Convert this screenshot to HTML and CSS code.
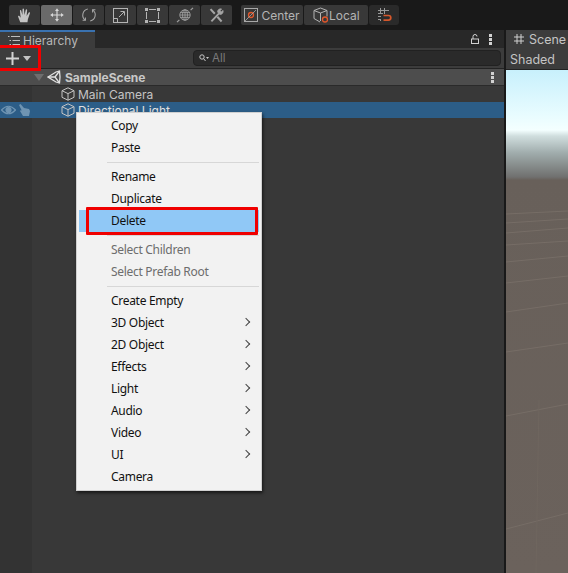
FILE: index.html
```html
<!DOCTYPE html>
<html lang="en">
<head>
    <meta charset="UTF-8">
    <title>Hierarchy</title>
    <link rel="stylesheet" href="styles.css">
</head>
<body>

    <div class="toolbar">
        <div class="tool-group">
            <button class="tool">
                <svg width="17" height="17" viewBox="0 0 20 20"><path d="M5 18 2.500 11.500c-.4-1 .9-1.600 1.500-.8L5.500 12.500 4.600 4.500c-.1-1.100 1.400-1.300 1.600-.2L7.500 9.500 7.700 2.700c0-1.100 1.600-1.100 1.700 0L10 9.500 11.500 3.200c.2-1 1.700-.8 1.600.3L12.500 10.500 15 6.500c.6-.9 1.800-.2 1.400.8L14 14.500 13.500 18Z" fill="#c4c4c4"/></svg>
            </button>
            <button class="tool tool-on">
                <svg width="16" height="16" viewBox="0 0 20 20" fill="none" stroke="#d8d8d8" stroke-width="1.500"><path d="M10 4v12M4 10h12"/><path d="M7.500 5 10 1.500 12.500 5ZM7.500 15 10 18.500 12.500 15ZM5 7.500 1.500 10 5 12.500ZM15 7.500 18.500 10 15 12.500Z" fill="#d8d8d8" stroke="none"/></svg>
            </button>
            <button class="tool">
                <svg width="16" height="16" viewBox="0 0 20 20" fill="none" stroke="#a8a8a8" stroke-width="1.300"><path d="M8.500 2.500A7.800 7.800 0 0 0 5.500 16.500M11.500 17.500A7.800 7.800 0 0 0 14.500 3.500"/><path d="M5.500 13v3.500H2M14.500 7V3.500H18"/></svg>
            </button>
            <button class="tool">
                <svg width="15" height="15" viewBox="0 0 15 15" fill="none" stroke="#b4b4b4"><rect x=".5" y=".5" width="14" height="14"/><path d="M.5 10.500h4v4"/><path d="M6 9 11 4M7.500 3.500h4V7.500"/></svg>
            </button>
            <button class="tool">
                <svg width="15" height="15" viewBox="0 0 15 15" fill="#b4b4b4"><rect x="0" y="0" width="3" height="3"/><rect x="12" y="0" width="3" height="3"/><rect x="0" y="12" width="3" height="3"/><rect x="12" y="12" width="3" height="3"/><rect x="4" y="1" width="7" height="1"/><rect x="4" y="13" width="7" height="1"/><rect x="1" y="4" width="1" height="7"/><rect x="13" y="4" width="1" height="7"/></svg>
            </button>
            <button class="tool">
                <svg width="18" height="16" viewBox="0 0 22 20" fill="none" stroke="#a0a0a0" stroke-width="1.100"><circle cx="11" cy="10" r="6.500"/><ellipse cx="11" cy="10" rx="3" ry="6.500"/><path d="M4.500 10h13M11 3.500v13M5.500 7h11M5.500 13h11"/><path d="M1 19l3-3M21 1l-3 3" stroke-width="1.500"/></svg>
            </button>
            <button class="tool">
                <svg width="17" height="17" viewBox="0 0 20 20" fill="none" stroke="#a4a4a4"><path d="M3 2.500 8 8M11 11.500 16 17" stroke-width="2.400"/><path d="M4 17 13 7.500" stroke-width="2.200"/><path d="M11.500 6.500a3.300 3.300 0 0 1 4.500-4l-2 2 1.500 1.500 2-2a3.300 3.300 0 0 1-4 4.500" fill="#a4a4a4" stroke-width="1"/></svg>
            </button>
        </div>
        <div class="tool-group pivot-group">
            <button class="tool tool-wide center-btn">
                <svg width="14" height="14" viewBox="0 0 14 14" fill="none"><rect x=".5" y=".5" width="13" height="13" stroke="#a8a8a8"/><circle cx="7" cy="7" r="2.500" stroke="#e2572b" stroke-width="1.300"/><path d="M1 13 12 2" stroke="#a8a8a8" stroke-width=".8"/></svg>
                <span>Center</span>
            </button>
            <button class="tool tool-wide local-btn">
                <svg width="16" height="16" viewBox="0 0 16 16" fill="none" stroke="#b4b4b4"><path d="M7.500 1 14 3.500v6M7.500 1 1 3.500v8L7 15M1 3.500 7.500 6 14 3.500M7.500 6v8"/><circle cx="12" cy="12.500" r="2.500" stroke="#e2572b" stroke-width="1.300"/></svg>
                <span>Local</span>
            </button>
        </div>
        <button class="tool snap-btn">
            <svg width="15" height="14" viewBox="0 0 15 14" fill="none"><path d="M3.500 0v6M7.500 0v6M1 2.500h11M1 5.500h5" stroke="#989898"/><path d="M1 8.500h2M1 11.500h2M3.500 8v1M3.500 11v2" stroke="#989898"/><path d="M6.500 7.500h5a2.300 2.300 0 0 1 0 4.600h-5" stroke="#d5572b" stroke-width="1.700"/></svg>
        </button>
    </div>

    <div class="workspace">
        <section class="hierarchy">
            <div class="tabbar">
                <div class="tab">
                    <svg width="12" height="9" viewBox="0 0 12 9" fill="none" stroke="#bdbdbd"><path d="M3 .5h9M4.500 4.500H12M4.500 8.500H12"/><path d="M0 .5h1.500M1.500 4.500h1.500M1.500 8.500h1.500"/></svg>
                    <span>Hierarchy</span>
                </div>
                <div class="tab-actions">
                    <svg width="8" height="10" viewBox="0 0 8 10" fill="none" stroke="#d2d2d2"><rect x=".5" y="5" width="7" height="4.500"/><path d="M2 5V2.500a2 2 0 0 1 4 0"/></svg>
                    <span class="dots"></span>
                </div>
            </div>
            <div class="searchbar">
                <div class="add-btn">
                    <svg width="13" height="13" viewBox="0 0 13 13"><path d="M5.500 0h2v5.500H13v2H7.500V13h-2V7.500H0v-2h5.500Z" fill="#d2d2d2"/></svg>
                    <span class="caret"></span>
                </div>
                <div class="search">
                    <svg width="10" height="8" viewBox="0 0 10 8" fill="none" stroke="#c8c8c8"><circle cx="3" cy="3" r="2.200"/><path d="M4.600 4.600 6.500 7"/><path d="M7 3h3L8.500 5Z" fill="#c8c8c8" stroke="none"/></svg>
                    <span>All</span>
                </div>
            </div>
            <div class="scene-row">
                <span class="fold"></span>
                <svg class="unity-mark" width="14" height="14" viewBox="0 0 14 14" fill="none" stroke="#e2e2e2" stroke-width="1.300"><path d="M1 7 9 2 12.500 1 13 7 12.500 13 9 12Z"/><path d="M1 7H8L12.500 1M8 7l4.500 6"/></svg>
                <span class="scene-name">SampleScene</span>
                <span class="dots"></span>
            </div>
            <div class="tree">
                <div class="tree-row">
                    <div class="gutter"></div>
                    <svg class="cube" width="14" height="14" viewBox="0 0 14 14" fill="none" stroke="#c4c4c4"><path d="M7 .8 13 3.700v6.600L7 13.200 1 10.300V3.700ZM1 3.700 7 6.600 13 3.700M7 6.600v6.600"/></svg>
                    <span>Main Camera</span>
                </div>
                <div class="tree-row selected">
                    <div class="gutter">
                        <svg width="15" height="10" viewBox="0 0 15 10" fill="none" stroke="#6f94b2" stroke-width="1.200"><path d="M.5 5Q7.500-2.500 14.500 5 7.500 12.500.5 5Z"/><circle cx="7.500" cy="5" r="2.500" fill="#6f94b2"/></svg>
                        <svg width="12" height="12" viewBox="0 0 12 12"><path d="M1 1 2.500 0 6 4l5 1 1 2-1 5H5L2 7l1-1 1 1Z" fill="#6f94b2"/></svg>
                    </div>
                    <svg class="cube" width="14" height="14" viewBox="0 0 14 14" fill="none" stroke="#c4c4c4"><path d="M7 .8 13 3.700v6.600L7 13.200 1 10.300V3.700ZM1 3.700 7 6.600 13 3.700M7 6.600v6.600"/></svg>
                    <span>Directional Light</span>
                </div>
                <div class="tree-rest"><div class="gutter"></div></div>
            </div>
        </section>

        <section class="scene">
            <div class="scene-tab">
                <svg width="10" height="10" viewBox="0 0 10 10" fill="none" stroke="#cfcfcf"><path d="M3 0v10M7 0v10M0 3h10M0 7h10"/></svg>
                <span>Scene</span>
            </div>
            <div class="scene-mode">Shaded</div>
            <div class="viewport">
                <svg class="floor" width="62" height="503" viewBox="0 0 62 503" fill="none" stroke="#766d66">
                    <path d="M0 459 62 443M0 346 62 334M0 282 62 273M0 242 62 233M0 213 62 206M0 192 62 186M0 175 62 171M0 163 62 158M0 153 62 149M0 144 62 141"/>
                    <path d="M30 503 33 330" stroke="#6f665f"/>
                </svg>
            </div>
        </section>
    </div>

    <div class="highlight plus-mark"></div>

    <div class="menu">
        <div class="item">Copy</div>
        <div class="item">Paste</div>
        <div class="sep"></div>
        <div class="item">Rename</div>
        <div class="item">Duplicate</div>
        <div class="item active">Delete</div>
        <div class="sep"></div>
        <div class="item disabled">Select Children</div>
        <div class="item disabled">Select Prefab Root</div>
        <div class="sep"></div>
        <div class="item">Create Empty</div>
        <div class="item sub">3D Object</div>
        <div class="item sub">2D Object</div>
        <div class="item sub">Effects</div>
        <div class="item sub">Light</div>
        <div class="item sub">Audio</div>
        <div class="item sub">Video</div>
        <div class="item sub">UI</div>
        <div class="item">Camera</div>
        <div class="highlight delete-mark"></div>
    </div>

</body>
</html>
```

FILE: styles.css
```css
* {
    box-sizing: border-box;
}

html, body {
    height: 100%;
}

body {
    margin: 0;
    display: flex;
    flex-direction: column;
    overflow: hidden;
    background-color: #191919;
    color: #c4c4c4;
    font-family: Inter, "Liberation Sans", sans-serif;
    font-size: 12px;
}

/* top toolbar */
.toolbar {
    height: 30px;
    flex: none;
    display: flex;
    align-items: center;
    padding-left: 9px;
}

.tool-group {
    display: flex;
    gap: 1px;
}

.tool {
    width: 31px;
    height: 20px;
    padding: 0;
    border: none;
    border-radius: 2px;
    background-color: #383838;
    color: #b4b4b4;
    font: inherit;
    display: flex;
    align-items: center;
    justify-content: center;
}

.tool-on {
    background-color: #6a6a6a;
}

.pivot-group {
    margin-left: 9px;
}

.tool-wide {
    gap: 3px;
}

.center-btn {
    width: 62px;
}

.local-btn {
    width: 64px;
    justify-content: flex-start;
    padding-left: 9px;
    gap: 0;
}

.snap-btn {
    width: 30px;
    margin-left: 1px;
    background-color: #2a2a2a;
    border-radius: 3px;
}

.workspace {
    flex: 1;
    display: flex;
    gap: 2px;
    min-height: 0;
}

/* hierarchy panel */
.hierarchy {
    width: 504px;
    flex: none;
    display: flex;
    flex-direction: column;
    background-color: #383838;
}

.tabbar {
    height: 18px;
    flex: none;
    display: flex;
    justify-content: space-between;
    background-color: #282828;
}

.tab {
    width: 95px;
    display: flex;
    align-items: center;
    gap: 3px;
    padding-left: 8px;
    background-color: #3c3c3c;
    border-top: 2px solid #3a72b0;
    color: #b8b8b8;
}

.tab-actions {
    display: flex;
    align-items: center;
    gap: 10px;
    padding-right: 12px;
}

.dots {
    width: 3px;
    height: 3px;
    margin: 3px 0;
    background-color: #d2d2d2;
    box-shadow: 0 -4px #d2d2d2, 0 4px #d2d2d2;
}

.searchbar {
    height: 21px;
    flex: none;
    display: flex;
    align-items: center;
    background-color: #3c3c3c;
    border-bottom: 1px solid #232323;
    padding-right: 3px;
}

.add-btn {
    width: 193px;
    display: flex;
    align-items: center;
    gap: 4px;
    padding-left: 6px;
}

.caret {
    width: 0;
    height: 0;
    border-left: 4px solid transparent;
    border-right: 4px solid transparent;
    border-top: 5px solid #c4c4c4;
}

.search {
    flex: 1;
    height: 16px;
    display: flex;
    align-items: center;
    gap: 3px;
    padding-left: 5px;
    background-color: #2a2a2a;
    border: 1px solid #212121;
    border-radius: 4px;
    color: #7a7a7a;
    font-size: 11.5px;
}

.scene-row {
    height: 17px;
    flex: none;
    display: flex;
    align-items: center;
    padding: 0 10px 0 34px;
    background-color: #4d4d4d;
    border-bottom: 1px solid #2a2a2a;
}

.fold {
    width: 0;
    height: 0;
    border-left: 5px solid transparent;
    border-right: 5px solid transparent;
    border-top: 7px solid #6e6e6e;
}

.unity-mark {
    margin-left: 3px;
}

.scene-name {
    flex: 1;
    margin-left: 4px;
    font-weight: 700;
    color: #c8c8c8;
}

.tree {
    flex: 1;
    display: flex;
    flex-direction: column;
}

.tree-row {
    height: 16px;
    flex: none;
    display: flex;
    align-items: center;
    gap: 3px;
    color: #c4c4c4;
}

.selected {
    background-color: #2c5d87;
    color: #e0e0e0;
}

.gutter {
    width: 32px;
    height: 100%;
    flex: none;
    margin-right: 28px;
    display: flex;
    align-items: center;
    gap: 2px;
    padding-left: 1px;
    background-color: #333333;
}

.selected .gutter {
    background-color: #2c5d87;
}

.tree-row .gutter {
    margin-right: 25px;
}

.cube {
    margin-left: 1px;
}

.tree-rest {
    flex: 1;
}

/* scene panel */
.scene {
    flex: 1;
    display: flex;
    flex-direction: column;
    background-color: #3c3c3c;
    min-width: 0;
}

.scene-tab {
    height: 18px;
    flex: none;
    display: flex;
    align-items: center;
    gap: 5px;
    padding-left: 8px;
    font-size: 12.5px;
    white-space: nowrap;
}

.scene-mode {
    height: 22px;
    flex: none;
    display: flex;
    align-items: center;
    padding: 2px 0 0 4px;
    font-size: 12.5px;
    border-bottom: 1px solid #232323;
}

.viewport {
    flex: 1;
    min-height: 0;
    background: linear-gradient(to bottom, #c8f0fc 0, #e8fcff 45px, #f4ffff 60px, #d0dede 66px, #a0acac 83px, #70706f 107px, #68605a 110px, #6b625c 100%);
}

.floor {
    display: block;
}

/* context menu */
.menu {
    position: absolute;
    left: 76px;
    top: 112px;
    width: 186px;
    height: 379px;
    padding: 2px;
    background-color: #f2f2f2;
    border: 1px solid #d0d0d0;
    box-shadow: 1px 2px 3px rgba(0, 0, 0, 0.6);
    color: #111;
    font-family: "Noto Sans", "Open Sans", sans-serif;
    font-size: 12px;
    letter-spacing: -0.3px;
}

.item {
    height: 22px;
    display: flex;
    align-items: center;
    padding: 0 0 2px 32px;
}

.active {
    background-color: #90c8f6;
}

.disabled {
    color: #6d6d6d;
}

.sub {
    position: relative;
}

.sub::after {
    content: "";
    position: absolute;
    right: 10px;
    top: 7px;
    width: 5px;
    height: 5px;
    border-top: 1px solid #444;
    border-right: 1px solid #444;
    transform: rotate(45deg);
}

.sep {
    height: 1px;
    margin: 3px 0 3px 28px;
    background-color: #d7d7d7;
}

/* red marks drawn on top of the screenshot */
.highlight {
    position: absolute;
    border: 3px solid #f00000;
    border-radius: 1px;
}

.plus-mark {
    left: -3px;
    top: 45px;
    width: 44px;
    height: 26px;
}

.delete-mark {
    left: 9px;
    top: 94px;
    width: 172px;
    height: 28px;
}
```
